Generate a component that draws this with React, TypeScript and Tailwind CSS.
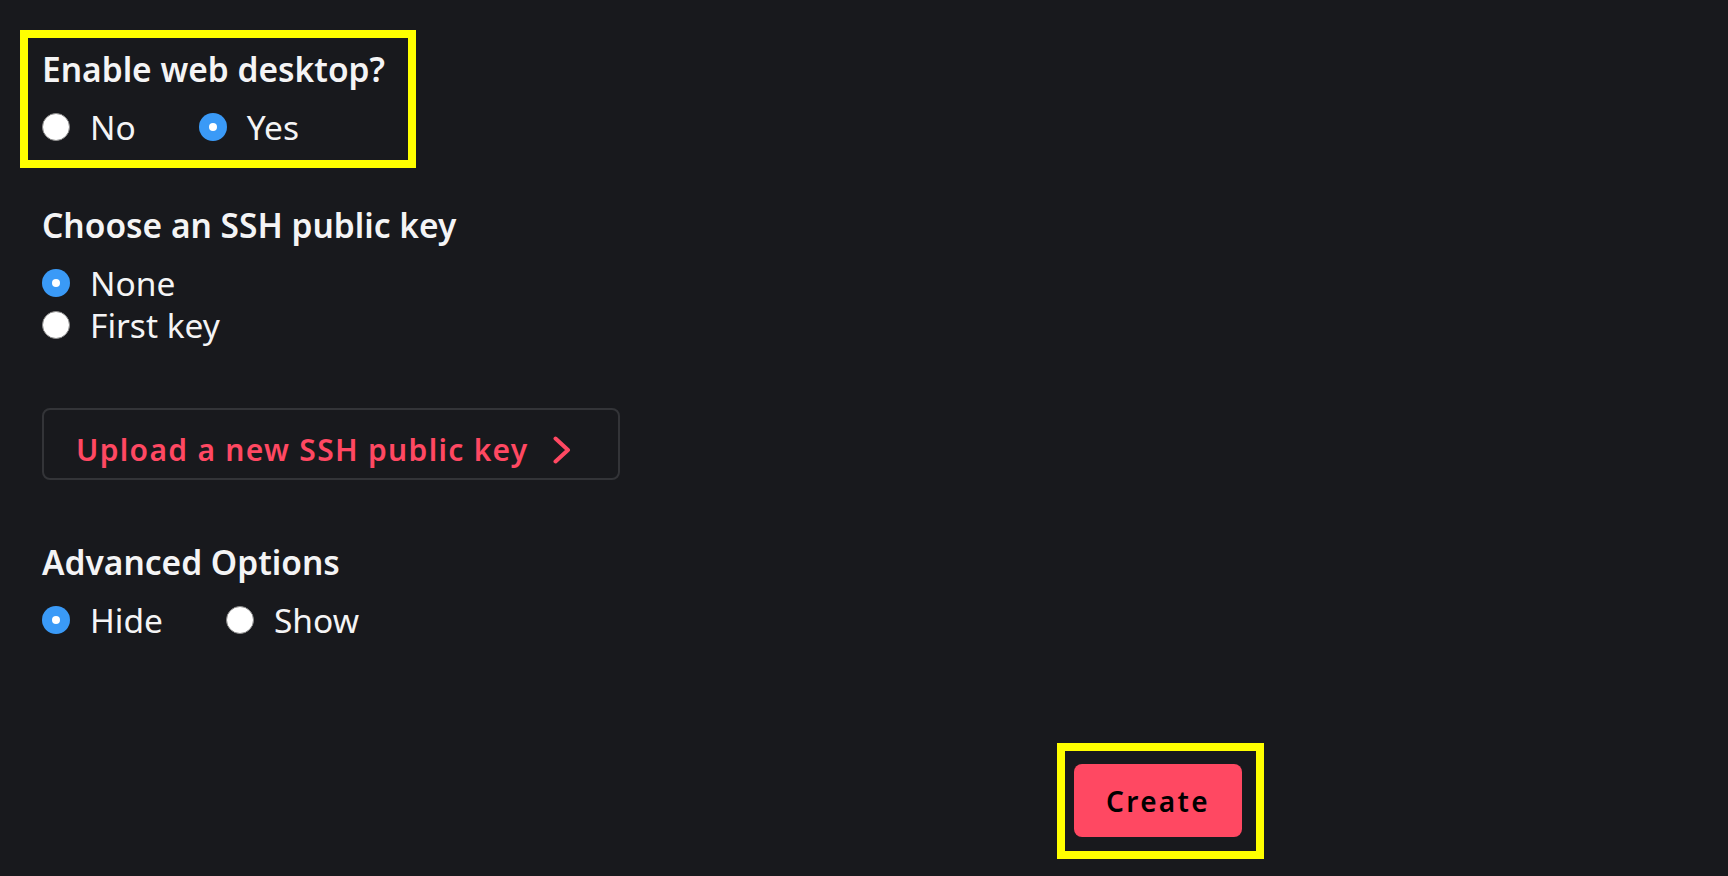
import React, { useState } from 'react';

type Option = { value: string; label: string };

const Radio: React.FC<{ checked: boolean; label: string; onSelect: () => void; className?: string }> = ({
  checked,
  label,
  onSelect,
  className = '',
}) => (
  <label className={`flex items-center h-[42px] cursor-pointer ${className}`} onClick={onSelect}>
    {checked ? (
      <span className="w-[28px] h-[28px] rounded-full bg-[#3a9af7] flex items-center justify-center shrink-0">
        <span className="w-[8px] h-[8px] rounded-full bg-white" />
      </span>
    ) : (
      <span className="w-[28px] h-[28px] rounded-full bg-white border border-[#8a8a8a] shrink-0" />
    )}
    <span className="ml-[20px] text-[33.5px] leading-[42px] text-[#f4f4f5]">{label}</span>
  </label>
);

const RadioGroup: React.FC<{
  title: string;
  options: Option[];
  value: string;
  onChange: (v: string) => void;
  inline?: boolean;
}> = ({ title, options, value, onChange, inline }) => (
  <div>
    <h2 className="text-[33.5px] leading-[42px] font-semibold text-[#f4f4f5] mb-[16px]">{title}</h2>
    <div className={inline ? 'flex' : 'flex flex-col'}>
      {options.map((o) => (
        <Radio
          key={o.value}
          checked={value === o.value}
          label={o.label}
          onSelect={() => onChange(o.value)}
          className={inline ? 'mr-[63px]' : ''}
        />
      ))}
    </div>
  </div>
);

export default function App() {
  const [desktop, setDesktop] = useState('yes');
  const [sshKey, setSshKey] = useState('none');
  const [advanced, setAdvanced] = useState('hide');

  return (
    <div
      className="min-h-screen w-full bg-[#18191d] pl-[28px] pt-[38px]"
      style={{ fontFamily: '"Noto Sans", "Open Sans", sans-serif' }}
    >
      <div className="w-[1236px]">
        {/* highlighted section */}
        <div className="w-[380px] h-[122px] outline-[8px] outline-solid outline-[#ffff00] pl-[14px] pt-[10px]">
          <RadioGroup
            title="Enable web desktop?"
            inline
            value={desktop}
            onChange={setDesktop}
            options={[
              { value: 'no', label: 'No' },
              { value: 'yes', label: 'Yes' },
            ]}
          />
        </div>

        <div className="pl-[14px] mt-[44px]">
          <RadioGroup
            title="Choose an SSH public key"
            value={sshKey}
            onChange={setSshKey}
            options={[
              { value: 'none', label: 'None' },
              { value: 'first', label: 'First key' },
            ]}
          />

          <button className="mt-[62px] w-[578px] h-[72px] border-2 border-[#333438] rounded-[8px] flex items-center pl-[32px] pt-[11px] text-[30px] font-semibold tracking-[1.3px] text-[#ff4862]">
            <span>Upload a new SSH public key</span>
            <svg width="18" height="28" viewBox="0 0 18 28" className="ml-[24px]" fill="none">
              <polyline points="2.5,2.5 15,14 2.5,25.5" stroke="#ff4862" strokeWidth="4" strokeLinecap="round" strokeLinejoin="round" />
            </svg>
          </button>

          <div className="mt-[61px]">
            <RadioGroup
              title="Advanced Options"
              inline
              value={advanced}
              onChange={setAdvanced}
              options={[
                { value: 'hide', label: 'Hide' },
                { value: 'show', label: 'Show' },
              ]}
            />
          </div>
        </div>

        <div className="flex justify-end mt-[102px]">
          <div className="border-[8px] border-[#ffff00] pl-[9px] pr-[14px] pt-[13px] pb-[14px]">
            <button className="w-[168px] h-[73px] rounded-[8px] bg-[#ff4862] text-black text-[28px] font-semibold tracking-[2.3px]">
              Create
            </button>
          </div>
        </div>
      </div>
    </div>
  );
}
